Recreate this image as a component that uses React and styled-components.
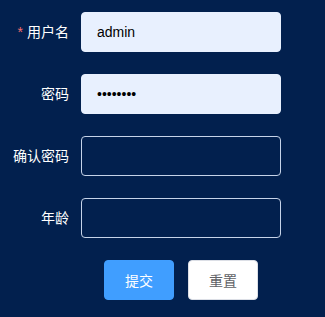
import React from "react";
import styled, { createGlobalStyle } from "styled-components";

const Global = createGlobalStyle`
  html, body { margin: 0; padding: 0; background: #02204e; }
  body { font-family: "Liberation Sans", Arial, "Noto Sans CJK SC", sans-serif; }
  * { box-sizing: border-box; }
`;

const Page = styled.div`
  width: 325px;
  height: 317px;
  background: #02204e;
  padding-top: 12px;
`;

const Form = styled.form`
  display: flex;
  flex-direction: column;
  gap: 22px;
`;

const Row = styled.div`
  display: flex;
  align-items: center;
  height: 40px;
`;

const Label = styled.label`
  width: 81px;
  padding-right: 12px;
  text-align: right;
  color: #ffffff;
  font-size: 14px;
  line-height: 40px;
  font-family: "Liberation Sans", Arial, "Noto Sans CJK SC", sans-serif;
`;

const Star = styled.span`
  color: #f56c6c;
  margin-right: 4px;
`;

const Input = styled.input`
  width: 200px;
  height: 40px;
  border-radius: 4px;
  padding: 0 15px;
  font-size: 14px;
  font-family: "Liberation Sans", Arial, sans-serif;
  outline: none;
  border: 1px solid ${(p) => (p.$filled ? "#e8f0fe" : "#c6d3e8")};
  background: ${(p) => (p.$filled ? "#e8f0fe" : "transparent")};
  color: ${(p) => (p.$filled ? "#000" : "#fff")};
`;

const Buttons = styled.div`
  width: 200px;
  margin-left: 81px;
  display: flex;
  justify-content: center;
  gap: 14px;
`;

const Button = styled.button`
  width: 70px;
  height: 40px;
  border-radius: 4px;
  font-size: 14px;
  font-family: "Liberation Sans", Arial, "Noto Sans CJK SC", sans-serif;
  cursor: pointer;
  border: 1px solid ${(p) => (p.$primary ? "#409eff" : "#dcdfe6")};
  background: ${(p) => (p.$primary ? "#409eff" : "#ffffff")};
  color: ${(p) => (p.$primary ? "#ffffff" : "#606266")};
`;

export default function App() {
  return (
    <Page>
      <Global />
      <Form onSubmit={(e) => e.preventDefault()}>
        <Row>
          <Label><Star>*</Star>用户名</Label>
          <Input $filled defaultValue="admin" />
        </Row>
        <Row>
          <Label>密码</Label>
          <Input $filled type="password" defaultValue="12345678" />
        </Row>
        <Row>
          <Label>确认密码</Label>
          <Input type="password" />
        </Row>
        <Row>
          <Label>年龄</Label>
          <Input />
        </Row>
        <Row>
          <Buttons>
            <Button $primary type="submit">提交</Button>
            <Button type="button">重置</Button>
          </Buttons>
        </Row>
      </Form>
    </Page>
  );
}
